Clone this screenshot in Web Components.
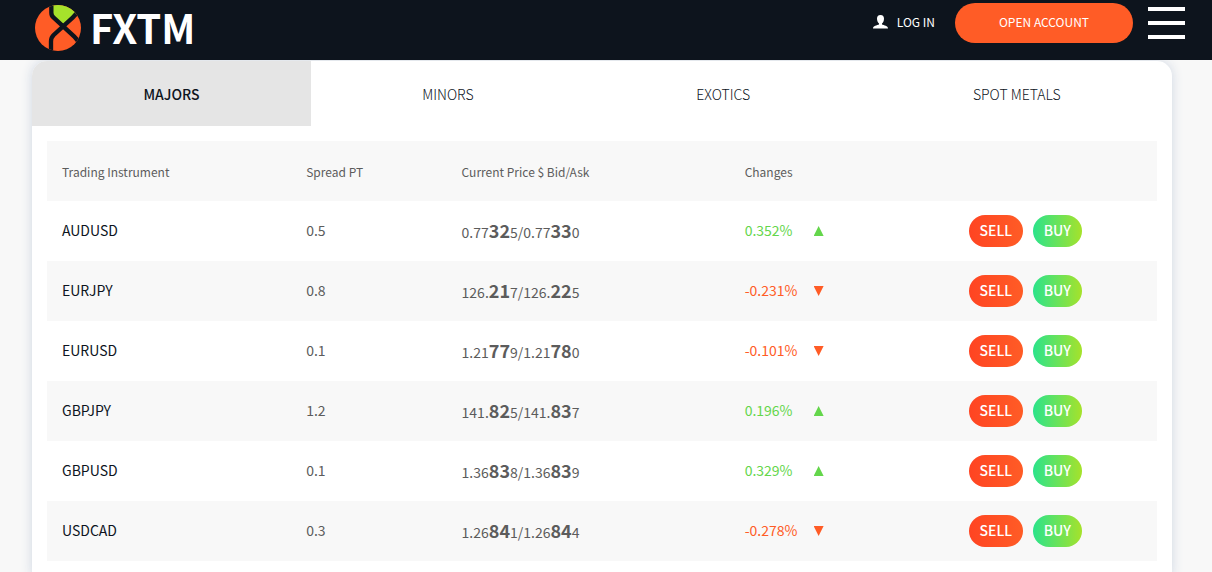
<!DOCTYPE html>
<html lang="en">
<head>
<meta charset="utf-8">
<meta name="viewport" content="width=device-width, initial-scale=1">
<title>FXTM – Live rates</title>
<style>
  body { margin: 0; background: #f8f8f8; font-family: "Noto Sans CJK SC", "Open Sans", sans-serif; color: #0d141d; }
</style>
</head>
<body>
<rates-page></rates-page>

<template id="page-tpl">
  <style>
    :host { display: flex; flex-direction: column; min-height: 100vh; }
    main { flex: 1; display: flex; flex-direction: column; padding: 0 40px 0 32px; overflow: hidden; }
    rates-card { flex: 1; }
  </style>
  <site-header></site-header>
  <main><rates-card></rates-card></main>
</template>

<template id="header-tpl">
  <style>
    :host { display: block; background: #0d141d; color: #fff; }
    header { display: flex; align-items: flex-start; height: 60px; padding: 0 27px 0 35px; box-sizing: border-box; position: relative; z-index: 1; background: #0d141d; }
    .brand { display: flex; align-items: flex-start; gap: 8px; color: #fff; text-decoration: none; font-size: 40px; line-height: 54px; font-weight: 700; margin-right: auto; }
    .brand svg { display: block; margin-top: 4px; }
    .login { display: flex; align-items: center; gap: 9px; height: 44px; margin-right: 20px; color: #fff; text-decoration: none; font-size: 12px; line-height: 16px; }
    .open { margin-top: 3px; width: 178px; height: 40px; border: 0; border-radius: 20px; background: #ff5c26; color: #fff; font: inherit; font-size: 12px; line-height: 16px; cursor: pointer; padding: 0 0 2px; }
    .menu { margin: 7px 0 0 15px; padding: 0; border: 0; background: none; cursor: pointer; line-height: 0; }
  </style>
  <header>
    <a class="brand" href="#">
      <svg width="47" height="48" viewBox="0 0 141 144" aria-hidden="true">
        <defs><clipPath id="disc"><circle cx="69" cy="72" r="69"/></clipPath></defs>
        <g clip-path="url(#disc)">
          <rect width="141" height="144" fill="#ff5c26"/>
          <path d="M49 0V28Q49 34 54 39L84 67L135 20V0Z" fill="#a6e22b"/>
          <g fill="none" stroke="#0d141d" stroke-width="13">
            <path d="M49 0V26Q49 35 56 41L118 98Q130 109 135 126"/>
            <path d="M133 14Q126 29 113 41L56 93Q48 101 48 112V144"/>
          </g>
        </g>
      </svg>
      <span>FXTM</span>
    </a>
    <a class="login" href="#">
      <svg width="15" height="14" viewBox="0 0 15 14" aria-hidden="true"><path fill="#fff" d="M7.500 0C5 0 4 1.500 4 3.700C4 6 5 7.800 6 8.500V9.600C4 10.500 0 10.800 0 13.500H15C15 10.800 11 10.500 9 9.600V8.500C10 7.800 11 6 11 3.700C11 1.500 10 0 7.500 0Z"/></svg>
      <span>LOG IN</span>
    </a>
    <button class="open" type="button">OPEN ACCOUNT</button>
    <button class="menu" type="button" aria-label="Menu">
      <svg width="37" height="33" viewBox="0 0 37 33"><path d="M0 2H37M0 16H37M0 30H37" stroke="#fff" stroke-width="4"/></svg>
    </button>
  </header>
</template>

<template id="card-tpl">
  <style>
    :host { display: block; margin-top: 1px; background: #fff; border-radius: 15px 15px 0 0; box-shadow: 0 0 12px #ced6e2; }
    nav { display: flex; border-radius: 15px 15px 0 0; overflow: hidden; }
    .box { padding: 15px; }
    table { width: 100%; border-collapse: collapse; table-layout: fixed; color: #5c5c5c; }
    th, td { height: 60px; padding: 0 15px 2px; text-align: left; font-size: 14px; line-height: 20px; font-weight: 400; box-sizing: border-box; }
    thead th { font-size: 12px; padding-top: 4px; }
    thead tr, tbody tr:nth-child(even) { background: #f8f8f8; }
    tbody th { color: #0d141d; }
    col:nth-child(1) { width: 22%; }
    col:nth-child(2) { width: 14%; }
    col:nth-child(3) { width: 25.5%; }
    col:nth-child(4) { width: 20.2%; }
    td.price, td.trade { padding-bottom: 0; }
    td b { font-size: 18px; }
    .actions { display: flex; align-items: center; gap: 10px; }
  </style>
  <nav aria-label="Instrument groups">
    <rate-tab selected>MAJORS</rate-tab>
    <rate-tab>MINORS</rate-tab>
    <rate-tab>EXOTICS</rate-tab>
    <rate-tab>SPOT METALS</rate-tab>
  </nav>
  <div class="box">
    <table>
      <colgroup><col><col><col><col><col></colgroup>
      <thead><tr>
        <th scope="col">Trading Instrument</th><th scope="col">Spread PT</th><th scope="col">Current Price $ Bid/Ask</th><th scope="col">Changes</th><td></td>
      </tr></thead>
      <tbody></tbody>
    </table>
  </div>
</template>

<template id="tab-tpl">
  <style>
    :host { display: flex; flex: 1 1 auto; }
    button { flex: 1; height: 65px; padding: 0; border: 0; background: none; font: inherit; font-size: 14px; line-height: 20px; font-weight: 300; color: #0d141d; cursor: pointer; }
    :host([selected]) button { background: #e5e5e5; font-weight: 500; }
  </style>
  <button type="button"><slot></slot></button>
</template>

<template id="change-tpl">
  <style>
    :host { display: flex; align-items: center; color: #64d64b; }
    :host([down]) { color: #ff5c26; }
    span { width: 69px; }
    i { width: 10px; height: 10px; margin-top: 2px; background: currentColor; clip-path: polygon(50% 0, 100% 100%, 0 100%); }
    :host([down]) i { clip-path: polygon(0 0, 100% 0, 50% 100%); }
  </style>
  <span><slot></slot></span><i></i>
</template>

<template id="trade-tpl">
  <style>
    :host { display: inline-flex; }
    button { width: 54px; height: 32px; padding: 0 0 2px; border: 0; border-radius: 16px; color: #fff; font: inherit; font-size: 14px; line-height: 20px; font-weight: 500; cursor: pointer; background: linear-gradient(90deg, #ff4422, #ff5c26); }
    :host([side="buy"]) button { width: 49px; background: linear-gradient(90deg, #2be38b, #a6e22b); }
  </style>
  <button type="button"><slot></slot></button>
</template>

<script>
  class Base extends HTMLElement {
    constructor() {
      super();
      this.attachShadow({ mode: "open" }).append(
        document.getElementById(this.constructor.tpl).content.cloneNode(true));
    }
  }
  customElements.define("rate-tab", class extends Base { static tpl = "tab-tpl"; });
  customElements.define("rate-change", class extends Base { static tpl = "change-tpl"; });
  customElements.define("trade-button", class extends Base { static tpl = "trade-tpl"; });
  customElements.define("site-header", class extends Base { static tpl = "header-tpl"; });

  const rates = [
    ["AUDUSD", "0.5", "0.77*32*5/0.77*33*0", "0.352%"],
    ["EURJPY", "0.8", "126.*21*7/126.*22*5", "-0.231%"],
    ["EURUSD", "0.1", "1.21*77*9/1.21*78*0", "-0.101%"],
    ["GBPJPY", "1.2", "141.*82*5/141.*83*7", "0.196%"],
    ["GBPUSD", "0.1", "1.36*83*8/1.36*83*9", "0.329%"],
    ["USDCAD", "0.3", "1.26*84*1/1.26*84*4", "-0.278%"]
  ];
  customElements.define("rates-card", class extends Base {
    static tpl = "card-tpl";
    connectedCallback() {
      this.shadowRoot.querySelector("tbody").innerHTML = rates.map(([name, spread, price, change]) => `
        <tr>
          <th scope="row">${name}</th>
          <td>${spread}</td>
          <td class="price">${price.replace(/\*(\d+)\*/g, "<b>$1</b>")}</td>
          <td><rate-change ${change[0] === "-" ? "down" : ""}>${change}</rate-change></td>
          <td class="trade"><div class="actions"><trade-button side="sell">SELL</trade-button><trade-button side="buy">BUY</trade-button></div></td>
        </tr>`).join("");
    }
  });
  customElements.define("rates-page", class extends Base { static tpl = "page-tpl"; });
</script>
</body>
</html>
